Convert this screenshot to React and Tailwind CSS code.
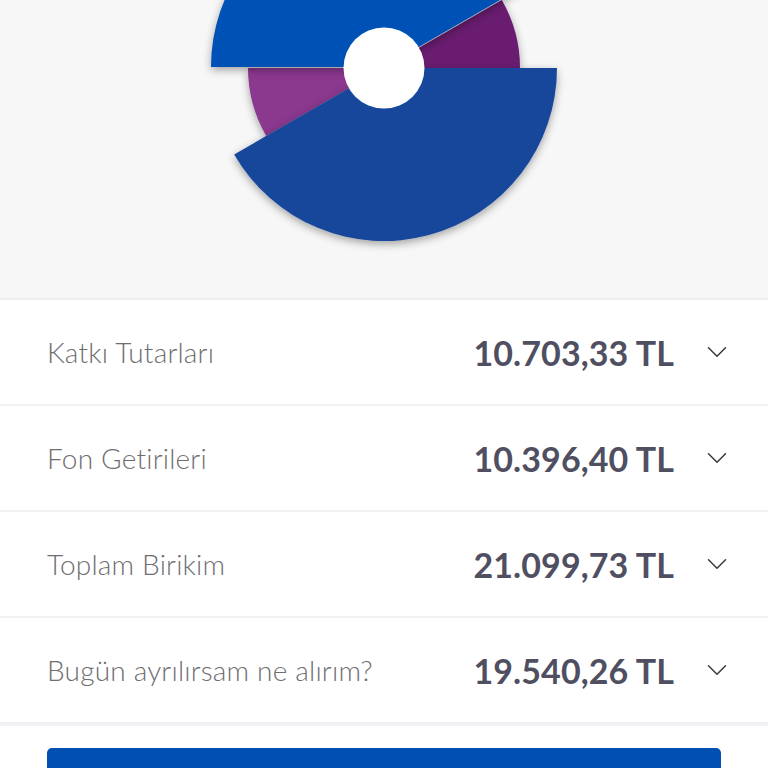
import { ChevronDown } from "lucide-react";

const rows = [
    { label: "Katkı Tutarları", value: "10.703,33 TL" },
    { label: "Fon Getirileri", value: "10.396,40 TL" },
    { label: "Toplam Birikim", value: "21.099,73 TL" },
    { label: "Bugün ayrılırsam ne alırım?", value: "19.540,26 TL" },
];

function pt(cx, cy, r, deg) {
    const a = (deg * Math.PI) / 180;
    return [cx + r * Math.cos(a), cy + r * Math.sin(a)];
}

function slice(cx, cy, r, a1, a2) {
    const [x1, y1] = pt(cx, cy, r, a1);
    const [x2, y2] = pt(cx, cy, r, a2);
    const large = a2 - a1 > 180 ? 1 : 0;
    return `M${cx} ${cy} L${x1} ${y1} A${r} ${r} 0 ${large} 1 ${x2} ${y2} Z`;
}

function Chart() {
    const cx = 384;
    const cy = 68;
    return (
        <svg width="768" height="298" viewBox="0 0 768 298">
            <defs>
                <filter id="sh" x="-20%" y="-20%" width="140%" height="140%">
                    <feDropShadow dx="0" dy="3" stdDeviation="4" floodColor="#000" floodOpacity="0.35" />
                </filter>
            </defs>
            <path d={slice(cx, cy, 136, 150, 180)} fill="#8b388f" filter="url(#sh)" />
            <path d={slice(cx, cy, 136, 330, 360)} fill="#6b1a70" filter="url(#sh)" />
            <path d={slice(cx, cy - 1, 173, 180, 330)} fill="#0151b5" filter="url(#sh)" />
            <path d={slice(cx, cy, 173, 0, 150)} fill="#18469b" filter="url(#sh)" />
            <circle cx={cx} cy={cy} r="40.5" fill="#fff" />
        </svg>
    );
}

export default function App() {
    return (
        <div className="w-[768px] h-[768px] overflow-hidden bg-white" style={{ fontFamily: "Lato, 'Open Sans', sans-serif" }}>
            <div className="h-[298px] bg-[#f7f7f7]">
                <Chart />
            </div>
            <div className="h-[2px] bg-[#eeeeee]" />
            <div className="flex flex-col">
                {rows.map((r) => (
                    <div key={r.label} className="h-[106px] flex items-center border-b-2 border-[#f1f1f5] pl-[47px] pr-[34px]">
                        <span className="flex-1 text-[28px] font-light text-[#6e6e72] tracking-[0.2px]">
                            {r.label}
                        </span>
                        <span className="text-[34px] font-bold text-[#4f4f61] tracking-[0.1px]">
                            {r.value}
                        </span>
                        <ChevronDown className="ml-[26px] text-[#3c3c44]" size={34} strokeWidth={1.1} />
                    </div>
                ))}
            </div>
            <div className="h-[2px] bg-[#f3f3f6]" />
            <div className="px-[47px] pt-[22px]">
                <div className="h-[60px] rounded-[5px] bg-[#0050b4]" />
            </div>
        </div>
    );
}
